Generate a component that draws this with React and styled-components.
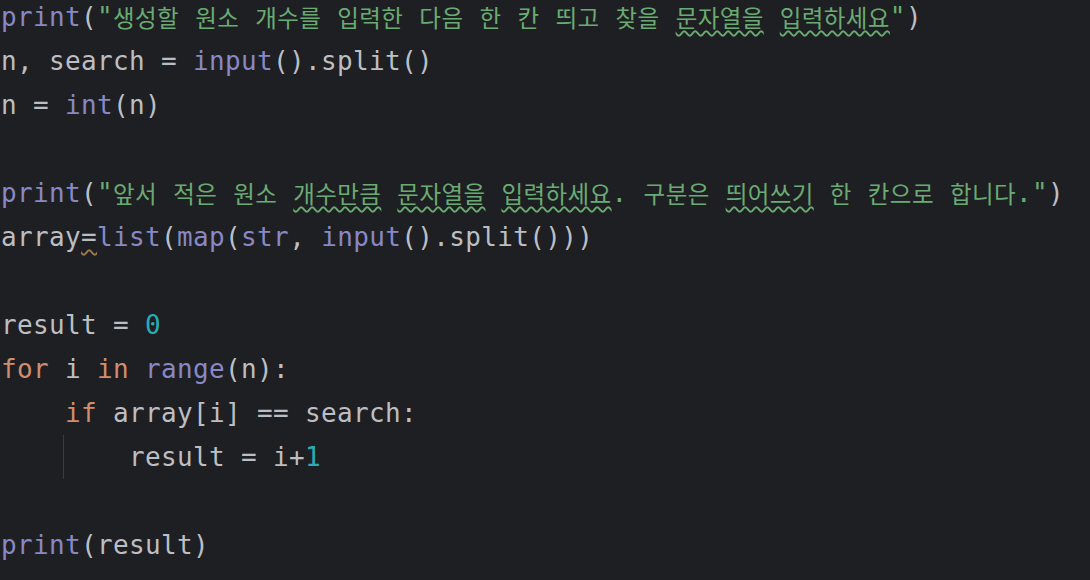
import React from "react";
import styled, { createGlobalStyle } from "styled-components";

const Global = createGlobalStyle`
  html, body { margin: 0; padding: 0; background: #1e1f22; overflow: hidden; }
  #root { width: 1090px; height: 580px; background: #1e1f22; }
`;

const Editor = styled.div`
  width: 1090px;
  height: 580px;
  overflow: hidden;
  background: #1e1f22;
  display: flex;
  flex-direction: column;
  margin-top: -5px;
  padding-left: 1px;
  box-sizing: border-box;
  font-family: "DejaVu Sans Mono", "Liberation Mono", monospace;
  font-size: 26px;
  letter-spacing: 0.35px;
  color: #bcbec4;
`;

const Line = styled.div`
  height: 44px;
  line-height: 44px;
  white-space: pre;
  display: flex;
  align-items: stretch;
`;

const Tok = styled.span`
  color: ${(p) =>
    p.$k === "kw" ? "#cf8e6d" :
    p.$k === "fn" ? "#8888c6" :
    p.$k === "str" ? "#6aab73" :
    p.$k === "num" ? "#2aacb8" : "#bcbec4"};
`;

const Hangul = styled.span`
  font-family: "Noto Sans CJK KR", sans-serif;
  font-size: 23.5px;
  letter-spacing: 0.4px;
  color: #6aab73;
`;

const Typo = styled.span`
  text-decoration-line: underline;
  text-decoration-style: wavy;
  text-decoration-color: ${(p) => p.$c || "#6aab73"};
  text-decoration-thickness: 1.5px;
  text-underline-offset: 3px;
`;

const Guide = styled.span`
  display: inline-block;
  width: 64px;
  position: relative;
  &::before {
    content: "";
    position: absolute;
    left: 62px;
    top: 0;
    bottom: 0;
    border-left: 1px solid #393b40;
  }
`;

function Kor({ text, typos = [] }) {
  const parts = text.split(/( )/);
  const render = (s) =>
    s
      .split(/([가-힣]+)/)
      .filter(Boolean)
      .map((seg, j) =>
        /[가-힣]/.test(seg) ? <Hangul key={j}>{seg}</Hangul> : <Tok key={j} $k="str">{seg}</Tok>
      );
  return (
    <>
      {parts.map((w, i) => {
        if (w === " ") return <Tok key={i} $k="str"> </Tok>;
        const core = w.replace(/[.]$/, "");
        if (typos.includes(core)) {
          const rest = w.slice(core.length);
          return (
            <React.Fragment key={i}>
              <Typo>{render(core)}</Typo>
              {rest && <Tok $k="str">{rest}</Tok>}
            </React.Fragment>
          );
        }
        return <React.Fragment key={i}>{render(w)}</React.Fragment>;
      })}
    </>
  );
}

export default function App() {
  return (
    <>
      <Global />
      <Editor>
        <Line>
          <Tok $k="fn">print</Tok><Tok>(</Tok><Tok $k="str">"</Tok>
          <Kor text="생성할 원소 개수를 입력한 다음 한 칸 띄고 찾을 문자열을 입력하세요" typos={["문자열을", "입력하세요"]} />
          <Tok $k="str">"</Tok><Tok>)</Tok>
        </Line>
        <Line>
          <Tok>n, search = </Tok><Tok $k="fn">input</Tok><Tok>().split()</Tok>
        </Line>
        <Line>
          <Tok>n = </Tok><Tok $k="fn">int</Tok><Tok>(n)</Tok>
        </Line>
        <Line />
        <Line>
          <Tok $k="fn">print</Tok><Tok>(</Tok><Tok $k="str">"</Tok>
          <Kor text="앞서 적은 원소 개수만큼 문자열을 입력하세요. 구분은 띄어쓰기 한 칸으로 합니다." typos={["개수만큼", "문자열을", "입력하세요", "띄어쓰기"]} />
          <Tok $k="str">"</Tok><Tok>)</Tok>
        </Line>
        <Line>
          <Tok>array</Tok><Typo $c="#a0784a"><Tok>=</Tok></Typo><Tok $k="fn">list</Tok><Tok>(</Tok><Tok $k="fn">map</Tok><Tok>(</Tok><Tok $k="fn">str</Tok><Tok>, </Tok><Tok $k="fn">input</Tok><Tok>().split()))</Tok>
        </Line>
        <Line />
        <Line>
          <Tok>result = </Tok><Tok $k="num">0</Tok>
        </Line>
        <Line>
          <Tok $k="kw">for</Tok><Tok> i </Tok><Tok $k="kw">in</Tok><Tok> </Tok><Tok $k="fn">range</Tok><Tok>(n):</Tok>
        </Line>
        <Line>
          <Tok>    </Tok><Tok $k="kw">if</Tok><Tok> array[i] == search:</Tok>
        </Line>
        <Line>
          <Guide /><Tok>    result = i+</Tok><Tok $k="num">1</Tok>
        </Line>
        <Line />
        <Line>
          <Tok $k="fn">print</Tok><Tok>(result)</Tok>
        </Line>
      </Editor>
    </>
  );
}
